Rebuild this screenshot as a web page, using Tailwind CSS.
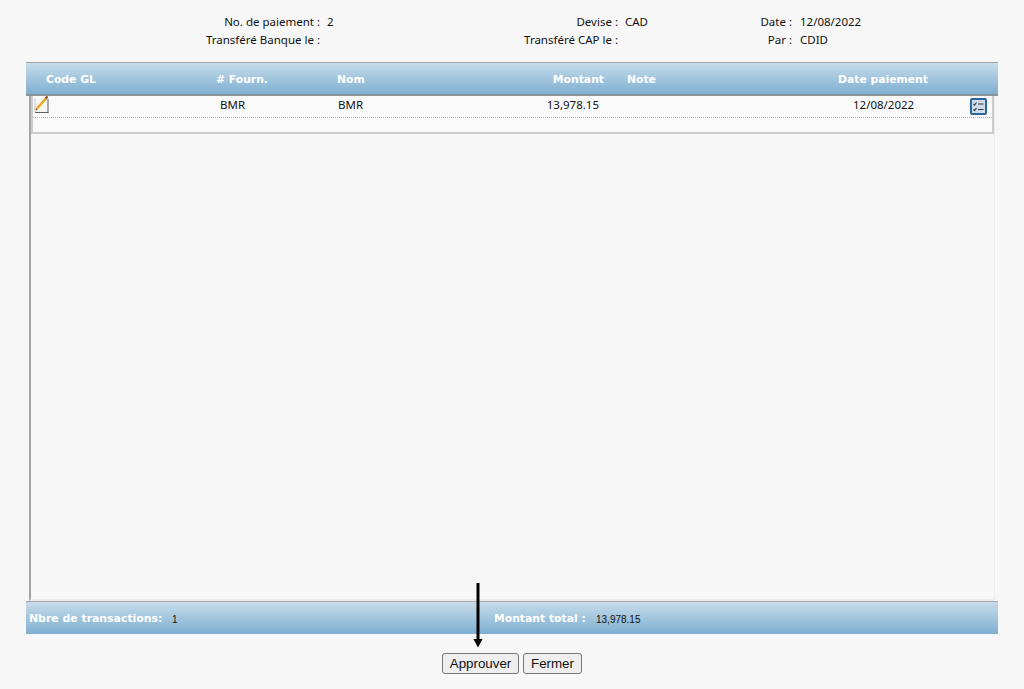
<!DOCTYPE html>
<html lang="fr">
<head>
  <meta charset="UTF-8" />
  <meta name="viewport" content="width=device-width, initial-scale=1.0" />
  <title>Paiement</title>
  <script src="https://cdn.jsdelivr.net/npm/@tailwindcss/browser@4"></script>
</head>
<body class="relative h-[689px] w-[1024px] overflow-hidden bg-[#f7f7f7] font-['Noto_Sans','DejaVu_Sans',sans-serif] text-[11.5px] text-[#111]">

  <!-- Entete -->
  <div class="grid h-[62px] grid-cols-[320px_120px_178px_120px_54px_1fr] content-start pt-[13px] leading-[18px]">
    <div class="text-right">No. de paiement :</div>
    <div class="pl-[7px]">2</div>
    <div class="text-right">Devise :</div>
    <div class="pl-[7px]">CAD</div>
    <div class="text-right">Date :</div>
    <div class="pl-[8px]">12/08/2022</div>

    <div class="text-right">Transféré Banque le :</div>
    <div></div>
    <div class="text-right">Transféré CAP le :</div>
    <div></div>
    <div class="text-right">Par :</div>
    <div class="pl-[8px]">CDID</div>
  </div>

  <div class="ml-[26px] w-[972px]">
    <!-- Barre de titres -->
    <div class="flex h-[34px] items-center border-t border-b-2 border-t-[#a5a5a5] border-b-[#8f9498] bg-gradient-to-b from-[#c6dcea] to-[#7eafd1] pt-[4px] font-['DejaVu_Sans',sans-serif] text-[10.8px] font-bold text-white">
      <span class="w-[191px] pl-[20px]">Code GL</span>
      <span class="w-[120px] -translate-x-px">&#35; Fourn.</span>
      <span class="w-[120px]">Nom</span>
      <span class="w-[147px] text-right">Montant</span>
      <span class="w-[234px] pl-[23px]">Note</span>
      <span>Date paiement</span>
    </div>

    <!-- Zone des lignes -->
    <div class="ml-[3px] h-[505px] w-[966px] border-b-2 border-l-2 border-r border-b-[#ececec] border-l-[#a3a3a3] border-r-[#ececec]">
      <div class="h-[38px] w-[963px] border-r-2 border-b-2 border-l-2 border-[#cccccc] bg-[#fafafa]">
        <div class="flex h-[22px] items-center border-b border-dotted border-[#b5b5b5] pb-[3px] leading-[18px]">
          <svg class="ml-[1px] shrink-0 self-start" width="15" height="17" viewBox="0 0 15 17">
            <path d="M1 2.500h13v14H1z" fill="#f6f6f3" />
            <path d="M1 16.500h13.500M14 3v13.500" stroke="#5d5d5d" fill="none" />
            <path d="M1 2.500v14" stroke="#c4c4c4" fill="none" />
            <path d="M2.500 13 12 2.500" stroke="#e9a923" stroke-width="2.600" fill="none" />
            <path d="M11.500 2.500 13.500 .5" stroke="#8b4a2b" stroke-width="2.400" fill="none" />
            <path d="M1.500 14.500 2 12.500l1.500 1.200z" fill="#6b4b22" />
          </svg>
          <span class="ml-[171px] w-[118px]">BMR</span>
          <span class="w-[100px]">BMR</span>
          <span class="w-[161px] text-right">13,978.15</span>
          <span class="ml-[254px] w-[117px]">12/08/2022</span>
          <span class="mt-[2px] flex h-[17px] w-[17px] shrink-0 items-center justify-center self-start rounded-[2px] border-2 border-[#2b689c] bg-[#cfdbe6]">
            <svg width="11" height="10" viewBox="0 0 11 10" fill="none" stroke="#2d3f50" stroke-width="1.200">
              <path d="M.5 2l1 1 2-2.500M5 2h5.500M.5 7.500l1 1 2-2.500M5 7.500h5.500" />
            </svg>
          </span>
        </div>
      </div>
    </div>

    <!-- Pied -->
    <div class="flex h-[33px] items-center border-t border-t-[#a5a5a5] bg-gradient-to-b from-[#c6dcea] to-[#7eafd1] pt-[2px]">
      <span class="w-[146px] pl-[3px] font-['DejaVu_Sans',sans-serif] text-[10.9px] font-bold whitespace-nowrap text-white">Nbre de transactions:</span>
      <span class="w-[322px] font-['Liberation_Sans',sans-serif] text-[10px]">1</span>
      <span class="w-[102px] font-['DejaVu_Sans',sans-serif] text-[10.8px] font-bold whitespace-nowrap text-white">Montant total :</span>
      <span class="font-['Liberation_Sans',sans-serif] text-[10px]">13,978.15</span>
    </div>
  </div>

  <!-- Boutons -->
  <div class="mt-[19px] flex gap-[4px] pl-[442px] font-['Liberation_Sans',sans-serif] text-[13.33px]">
    <button class="h-[21px] w-[77px] rounded-[3px] border border-[#767676] bg-[#efefef] leading-none">Approuver</button>
    <button class="h-[21px] w-[59px] rounded-[3px] border border-[#767676] bg-[#efefef] leading-none">Fermer</button>
  </div>

  <!-- Fleche annotee -->
  <svg class="absolute top-[583px] left-[472px]" width="12" height="65" viewBox="0 0 12 65">
    <path d="M6 0v57" stroke="#000" stroke-width="3" />
    <path d="M1.500 56h9L6 64.500z" fill="#000" />
  </svg>
</body>
</html>
